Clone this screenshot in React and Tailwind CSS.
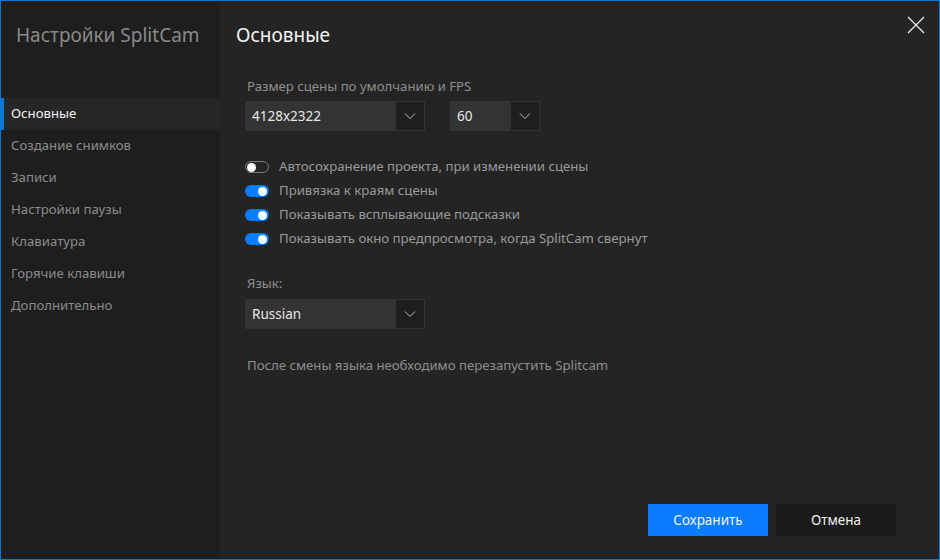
import React, { useState } from 'react';

const navItems = [
    'Основные',
    'Создание снимков',
    'Записи',
    'Настройки паузы',
    'Клавиатура',
    'Горячие клавиши',
    'Дополнительно',
];

function Chevron() {
    return (
        <svg width="12" height="8" viewBox="0 0 12 8" fill="none">
            <path d="M1 1.5 L6 6.5 L11 1.5" stroke="#bdbdbd" strokeWidth="1" />
        </svg>
    );
}

function Select({ value, width }) {
    return (
        <div className={`flex h-[30px] bg-[#333333] ${width}`}>
            <div className="flex-1 flex items-center pl-[7px] text-[13.5px] text-[#e8e8e8]">{value}</div>
            <div className="w-[28px] my-[1px] mr-[1px] bg-[#1e1e1e] flex items-center justify-center">
                <Chevron />
            </div>
        </div>
    );
}

function Toggle({ on, onClick }) {
    return on ? (
        <button onClick={onClick} className="w-[24px] h-[12px] rounded-full bg-[#0a7cff] flex items-center justify-end pr-[2px]">
            <span className="w-[9px] h-[9px] rounded-full bg-white" />
        </button>
    ) : (
        <button onClick={onClick} className="w-[24px] h-[12px] rounded-full border border-[#7a7a7a] flex items-center pl-[1px]">
            <span className="w-[9px] h-[9px] rounded-full bg-white" />
        </button>
    );
}

export default function App() {
    const [active, setActive] = useState(0);
    const [toggles, setToggles] = useState([false, true, true, true]);

    const options = [
        'Автосохранение проекта, при изменении сцены',
        'Привязка к краям сцены',
        'Показывать всплывающие подсказки',
        'Показывать окно предпросмотра, когда SplitCam свернут',
    ];

    return (
        <div className="w-[940px] h-[560px] border border-[#0a78d7] flex bg-[#242424] overflow-hidden" style={{ fontFamily: '"Noto Sans", "Open Sans", sans-serif' }}>
            {/* Sidebar */}
            <div className="w-[219px] bg-[#1e1e1e] flex flex-col">
                <div className="h-[97px] pl-[15px] pt-[20px] text-[19px] text-[#8a8a8a]">Настройки SplitCam</div>
                {navItems.map((item, i) => (
                    <div
                        key={item}
                        onClick={() => setActive(i)}
                        className={`h-[32px] flex items-center pl-[7px] text-[13.2px] cursor-pointer border-l-[3px] ${i === active ? 'bg-[#262626] text-[#f0f0f0] border-[#0a78d7]' : 'text-[#8c8c8c] border-transparent'}`}
                    >
                        {item}
                    </div>
                ))}
            </div>

            {/* Main */}
            <div className="flex-1 flex flex-col relative">
                <button className="absolute right-[14px] top-[15px]">
                    <svg width="18" height="18" viewBox="0 0 18 18">
                        <path d="M1 1 L17 17 M17 1 L1 17" stroke="#f0f0f0" strokeWidth="1.2" />
                    </svg>
                </button>

                <div className="pl-[16px] pt-[20px] text-[19px] text-[#f4f4f4]">Основные</div>

                <div className="pl-[25px] pt-[27px] flex flex-col">
                    <div className="text-[13.2px] text-[#8e8e8e] pl-[2px]">Размер сцены по умолчанию и FPS</div>
                    <div className="flex gap-[25px] mt-[5px]">
                        <Select value="4128x2322" width="w-[180px]" />
                        <Select value="60" width="w-[90px]" />
                    </div>

                    <div className="flex flex-col gap-[6px] mt-[27px]">
                        {options.map((label, i) => (
                            <div key={label} className="flex items-center gap-[10px] h-[18px]">
                                <Toggle on={toggles[i]} onClick={() => setToggles(t => t.map((v, j) => (j === i ? !v : v)))} />
                                <span className="text-[13.2px] text-[#9a9a9a]">{label}</span>
                            </div>
                        ))}
                    </div>

                    <div className="text-[13.2px] text-[#8e8e8e] pl-[2px] mt-[26px]">Язык:</div>
                    <div className="mt-[5px]">
                        <Select value="Russian" width="w-[180px]" />
                    </div>

                    <div className="text-[13.2px] text-[#8e8e8e] pl-[2px] mt-[27px]">После смены языка необходимо перезапустить Splitcam</div>
                </div>

                <div className="mt-auto flex justify-end gap-[8px] pr-[43px] pb-[23px]">
                    <button className="w-[120px] h-[32px] bg-[#0a7cff] text-[13.5px] text-[#f0f0f0]">Сохранить</button>
                    <button className="w-[120px] h-[32px] bg-[#1a1a1a] text-[13.5px] text-[#f0f0f0]">Отмена</button>
                </div>
            </div>
        </div>
    );
}
